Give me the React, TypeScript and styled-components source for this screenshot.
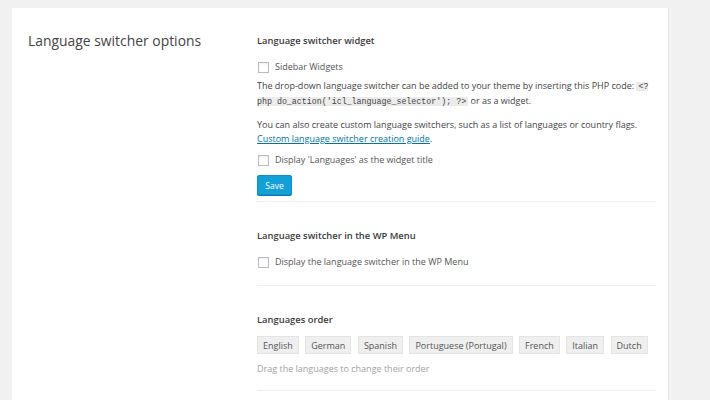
import React from "react";
import styled, { createGlobalStyle } from "styled-components";

const Global = createGlobalStyle`
  html, body { margin: 0; padding: 0; background: #f1f1f1; }
  body { font-family: "Open Sans", "Liberation Sans", sans-serif; color: #444; }
  * { box-sizing: border-box; }
`;

const Page = styled.div`
  width: 710px;
  height: 400px;
  overflow: hidden;
  padding: 8px 0 0 12px;
`;

const Panel = styled.div`
  width: 657px;
  height: 400px;
  background: #fff;
  border-right: 1px solid #e6e6e6;
  display: grid;
  grid-template-columns: 229px 399px;
  padding: 0 0 0 16px;
`;

const SideTitle = styled.h2`
  margin: 23px 0 0;
  font-size: 13.9px;
  line-height: 19px;
  font-weight: 400;
  color: #444;
`;

const Main = styled.div`
  display: flex;
  flex-direction: column;
`;

const Section = styled.section<{ $pt: number; $pb: number }>`
  padding: ${(p) => p.$pt}px 0 ${(p) => p.$pb}px;
  border-bottom: 1px solid #eeeeee;
  display: flex;
  flex-direction: column;
`;

const Heading = styled.h3`
  margin: 0;
  font-size: 9.4px;
  line-height: 14px;
  font-weight: 600;
  color: #3c3c3c;
`;

const CheckRow = styled.label<{ $mt: number }>`
  margin-top: ${(p) => p.$mt}px;
  display: flex;
  align-items: center;
  gap: 6px;
  font-size: 9px;
  line-height: 14px;
  color: #555;
`;

const Box = styled.span`
  width: 11px;
  height: 11px;
  margin-left: 1px;
  border: 1px solid #b9bcc0;
  background: #fff;
  box-shadow: inset 0 1px 2px rgba(0, 0, 0, 0.07);
`;

const Para = styled.p<{ $mt: number }>`
  margin: ${(p) => p.$mt}px 0 0;
  font-size: 9px;
  line-height: 14px;
  color: #444;
`;

const Code = styled.code`
  font-family: "Liberation Mono", "DejaVu Sans Mono", monospace;
  font-size: 8.3px;
  background: #ececec;
  padding: 0 2px;
  color: #444;
`;

const Link = styled.a`
  color: #0073aa;
  text-decoration: underline;
`;

const SaveButton = styled.button`
  margin-top: 8px;
  align-self: flex-start;
  width: 35px;
  height: 20px;
  border: 1px solid #0b91c7;
  border-radius: 2px;
  background: #12a0d7;
  color: #fff;
  font-family: "Open Sans", "Liberation Sans", sans-serif;
  font-size: 8.5px;
  padding: 0;
  box-shadow: 0 1px 0 #0b7fb0;
`;

const Tags = styled.div`
  margin-top: 9px;
  display: flex;
  gap: 6.5px;
`;

const Tag = styled.span`
  height: 18px;
  padding: 0 5px;
  display: flex;
  align-items: center;
  background: #efefef;
  border: 1px solid #e4e4e4;
  font-size: 9px;
  color: #555;
`;

const Hint = styled.p`
  margin: 8px 0 0;
  font-size: 9px;
  line-height: 14px;
  color: #a2a2a2;
`;

const languages = [
  "English",
  "German",
  "Spanish",
  "Portuguese (Portugal)",
  "French",
  "Italian",
  "Dutch",
];

export default function App() {
  return (
    <Page>
      <Global />
      <Panel>
        <SideTitle>Language switcher options</SideTitle>
        <Main>
          <Section $pt={26} $pb={6}>
            <Heading>Language switcher widget</Heading>
            <CheckRow $mt={12}>
              <Box />
              Sidebar Widgets
            </CheckRow>
            <Para $mt={5}>
              The drop-down language switcher can be added to your theme by
              inserting this PHP code:{" "}
              <Code>&lt;?php do_action('icl_language_selector'); ?&gt;</Code>{" "}
              or as a widget.
            </Para>
            <Para $mt={9}>
              You can also create custom language switchers, such as a list of
              languages or country flags.{" "}
              <Link href="#">Custom language switcher creation guide</Link>.
            </Para>
            <CheckRow $mt={7}>
              <Box />
              Display 'Languages' as the widget title
            </CheckRow>
            <SaveButton>Save</SaveButton>
          </Section>
          <Section $pt={27} $pb={16}>
            <Heading>Language switcher in the WP Menu</Heading>
            <CheckRow $mt={12}>
              <Box />
              Display the language switcher in the WP Menu
            </CheckRow>
          </Section>
          <Section $pt={27} $pb={14}>
            <Heading>Languages order</Heading>
            <Tags>
              {languages.map((l) => (
                <Tag key={l}>{l}</Tag>
              ))}
            </Tags>
            <Hint>Drag the languages to change their order</Hint>
          </Section>
        </Main>
      </Panel>
    </Page>
  );
}
